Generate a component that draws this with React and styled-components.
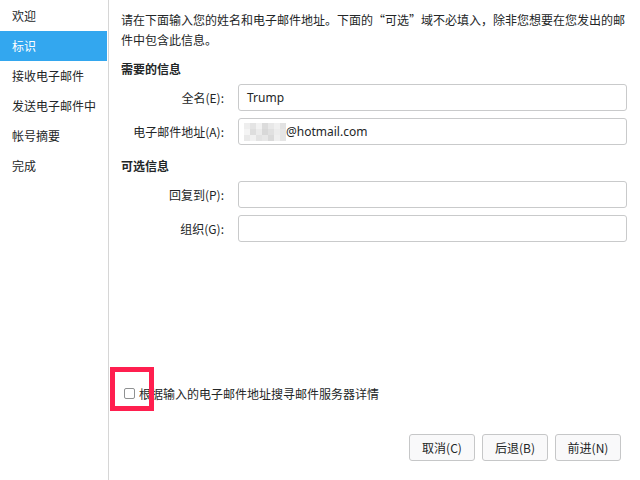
import React from 'react';
import styled, { createGlobalStyle } from 'styled-components';

const GlobalStyle = createGlobalStyle`
  html, body {
    margin: 0;
    padding: 0;
    background: #ffffff;
  }
  body {
    font-family: "Noto Sans CJK SC", "Noto Sans", sans-serif;
    color: #232627;
  }
`;

const steps = ['欢迎', '标识', '接收电子邮件', '发送电子邮件中', '帐号摘要', '完成'];

const mosaic = [
  '#eeeeee', '#e4e4e4', '#f2f2f2', '#dcdcdc', '#e8e8e8', '#f0f0f0', '#e2e2e2',
  '#f4f4f4', '#dedede', '#ebebeb', '#d8d8d8', '#e0e0e0', '#ececec', '#e6e6e6',
  '#e9e9e9', '#f1f1f1', '#e3e3e3', '#e7e7e7', '#dadada', '#efefef', '#e5e5e5',
];

export default function App() {
  return (
    <>
      <GlobalStyle />
      <Window>
        <Sidebar>
          {steps.map((s, i) => (
            <StepItem key={s} $active={i === 1}>{s}</StepItem>
          ))}
        </Sidebar>
        <Main>
          <Intro>
            请在下面输入您的姓名和电子邮件地址。下面的“可选”域不必填入，除非您想要在您发出的邮件中包含此信息。
          </Intro>
          <SectionTitle>需要的信息</SectionTitle>
          <FormGrid>
            <FieldLabel>全名(E):</FieldLabel>
            <TextBox>Trump</TextBox>
            <FieldLabel>电子邮件地址(A):</FieldLabel>
            <TextBox>
              <Redacted>
                {mosaic.map((c, i) => (
                  <MosaicCell key={i} $shade={c} />
                ))}
              </Redacted>
              @hotmail.com
            </TextBox>
          </FormGrid>
          <SectionTitle $gap={11}>可选信息</SectionTitle>
          <FormGrid>
            <FieldLabel>回复到(P):</FieldLabel>
            <TextBox />
            <FieldLabel>组织(G):</FieldLabel>
            <TextBox />
          </FormGrid>
          <CheckRow>
            <Marker />
            <CheckBox />
            <span>根据输入的电子邮件地址搜寻邮件服务器详情</span>
          </CheckRow>
          <ButtonBar>
            <Button>取消(C)</Button>
            <Button>后退(B)</Button>
            <Button>前进(N)</Button>
          </ButtonBar>
        </Main>
      </Window>
    </>
  );
}

const Window = styled.div`
  width: 640px;
  height: 480px;
  display: flex;
  background: #ffffff;
  font-size: 12px;
  overflow: hidden;
`;

const Sidebar = styled.nav`
  width: 109px;
  flex-shrink: 0;
  box-sizing: border-box;
  padding: 1px 1px 0 0;
  border-right: 1px solid #d6d6d6;
`;

const StepItem = styled.div`
  height: 30px;
  line-height: 30px;
  padding-left: 12px;
  background: ${(p) => (p.$active ? '#33a7ef' : 'transparent')};
  color: ${(p) => (p.$active ? '#ffffff' : '#232627')};
  white-space: nowrap;
`;

const Main = styled.main`
  flex: 1;
  display: flex;
  flex-direction: column;
  padding: 10px 13px 19px 12px;
  min-width: 0;
`;

const Intro = styled.p`
  margin: 0;
  width: 508px;
  line-height: 20px;
`;

const SectionTitle = styled.h3`
  margin: ${(p) => p.$gap || 9}px 0 5px;
  font-size: 12px;
  font-weight: 700;
  line-height: 20px;
`;

const FormGrid = styled.div`
  display: grid;
  grid-template-columns: 107px 1fr;
  column-gap: 10px;
  row-gap: 7px;
  align-items: center;
  width: 506px;
`;

const FieldLabel = styled.label`
  text-align: right;
  white-space: nowrap;
  padding-right: 4px;
`;

const TextBox = styled.div`
  height: 27px;
  box-sizing: border-box;
  border: 1px solid #c9cacb;
  border-radius: 3px;
  padding: 0 8px;
  display: flex;
  align-items: center;
  background: #ffffff;
  font-family: "Noto Sans", sans-serif;
  font-size: 12px;
`;

const Redacted = styled.span`
  display: grid;
  grid-template-columns: repeat(7, 6px);
  grid-template-rows: repeat(3, 6px);
  margin-left: -3px;
`;

const MosaicCell = styled.span`
  background: ${(p) => p.$shade};
`;

const CheckRow = styled.label`
  position: relative;
  margin-top: auto;
  display: flex;
  align-items: center;
  gap: 4px;
  padding-left: 3px;
  height: 20px;
  margin-bottom: 31px;
  white-space: nowrap;
`;

const CheckBox = styled.span`
  width: 11px;
  height: 11px;
  box-sizing: border-box;
  border: 1px solid #8f9192;
  border-radius: 2px;
  background: #ffffff;
`;

const Marker = styled.span`
  position: absolute;
  left: -11px;
  top: -16px;
  width: 44px;
  height: 44px;
  box-sizing: border-box;
  border: 5px solid #ff1f4f;
  pointer-events: none;
`;

const ButtonBar = styled.div`
  display: flex;
  justify-content: flex-end;
  gap: 7px;
  padding-right: 6px;
`;

const Button = styled.button`
  width: 66px;
  height: 27px;
  border: 1px solid #c6c7c8;
  border-radius: 3px;
  background: #f9f9fa;
  color: #232627;
  font-family: "Noto Sans CJK SC", "Noto Sans", sans-serif;
  font-size: 12px;
  padding: 0;
`;
